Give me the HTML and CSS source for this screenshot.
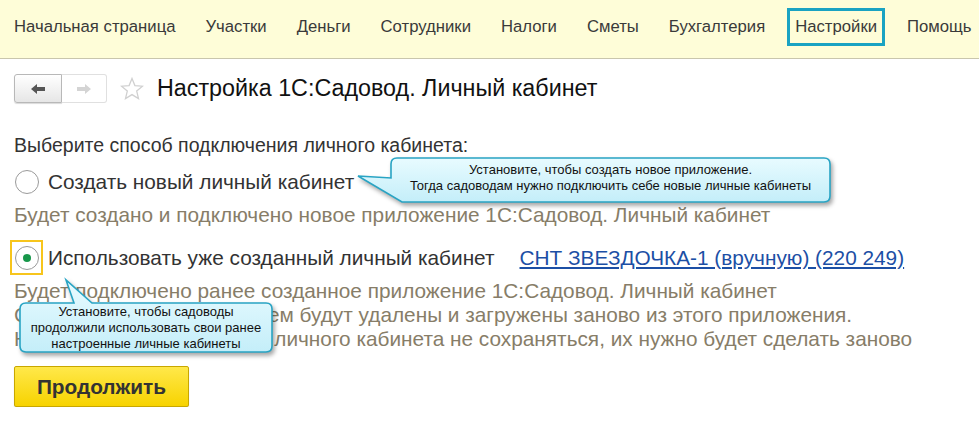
FILE: index.html
```html
<!DOCTYPE html>
<html lang="ru">
<head>
    <meta charset="UTF-8">
    <title>Настройка 1С:Садовод. Личный кабинет</title>
    <link rel="stylesheet" href="styles.css">
</head>
<body>
    <header class="topbar">
        <nav class="menu">
            <span class="menu-item">Начальная страница</span>
            <span class="menu-item">Участки</span>
            <span class="menu-item">Деньги</span>
            <span class="menu-item">Сотрудники</span>
            <span class="menu-item">Налоги</span>
            <span class="menu-item">Сметы</span>
            <span class="menu-item">Бухгалтерия</span>
            <span class="menu-item active">Настройки</span>
            <span class="menu-item">Помощь</span>
        </nav>
    </header>

    <main class="page">
        <div class="titlebar">
            <div class="nav-buttons">
                <span class="nav-btn back">
                    <svg width="14" height="10" viewBox="0 0 14 10"><path d="M0 5 L6 0 V3 H14 V7 H6 V10 Z"/></svg>
                </span>
                <span class="nav-btn forward">
                    <svg width="14" height="10" viewBox="0 0 14 10"><path d="M14 5 L8 0 V3 H0 V7 H8 V10 Z"/></svg>
                </span>
            </div>
            <svg class="star" width="24" height="24" viewBox="0 0 24 24">
                <path d="M12 1.5 L14.9 8.6 L22.5 9.2 L16.7 14.1 L18.5 21.6 L12 17.6 L5.5 21.6 L7.3 14.1 L1.5 9.2 L9.1 8.6 Z"/>
            </svg>
            <h1>Настройка 1С:Садовод. Личный кабинет</h1>
        </div>

        <p class="prompt">Выберите способ подключения личного кабинета:</p>

        <div class="option first">
            <span class="radio-box"><span class="radio"></span></span>
            <span class="option-label">Создать новый личный кабинет</span>
        </div>
        <p class="hint">Будет создано и подключено новое приложение 1С:Садовод. Личный кабинет</p>

        <div class="option second">
            <span class="radio-box focused"><span class="radio checked"></span></span>
            <span class="option-label">Использовать уже созданный личный кабинет</span>
            <a class="app-link" href="#">СНТ ЗВЕЗДОЧКА-1 (вручную) (220 249)</a>
        </div>
        <p class="hint">
            Будет подключено ранее созданное приложение 1С:Садовод. Личный кабинет<br>
            Сведения о садоводах в нем будут удалены и загружены заново из этого приложения.<br>
            Настройки подключенного личного кабинета не сохраняться, их нужно будет сделать заново
        </p>

        <button class="continue" type="button">Продолжить</button>

        <!-- callouts over the form -->
        <div class="callout callout-new">
            <svg class="callout-shape" width="485" height="52" viewBox="0 0 485 52">
                <defs>
                    <linearGradient id="fillA" x1="0" y1="0" x2="0" y2="1">
                        <stop offset="0" stop-color="#e8fbff"/>
                        <stop offset="1" stop-color="#c4eef9"/>
                    </linearGradient>
                </defs>
                <path d="M45 3 H472 Q478 3 478 9 V41 Q478 47 472 47 H50 L6 21 L39 23 V9 Q39 3 45 3 Z" fill="url(#fillA)"/>
            </svg>
            <div class="callout-text">Установите, чтобы создать новое приложение.<br>Тогда садоводам нужно подключить себе новые личные кабинеты</div>
        </div>

        <div class="callout callout-old">
            <svg class="callout-shape" width="262" height="90" viewBox="0 0 262 90">
                <defs>
                    <linearGradient id="fillB" x1="0" y1="0" x2="0" y2="1">
                        <stop offset="0" stop-color="#e8fbff"/>
                        <stop offset="1" stop-color="#c4eef9"/>
                    </linearGradient>
                </defs>
                <path d="M10 35 H58 L50 12 L76 35 H250 Q256 35 256 41 V78 Q256 84 250 84 H10 Q4 84 4 78 V41 Q4 35 10 35 Z" fill="url(#fillB)"/>
            </svg>
            <div class="callout-text">Установите, чтобы садоводы<br>продолжили использовать свои ранее<br>настроенные личные кабинеты</div>
        </div>
    </main>
</body>
</html>
```

FILE: styles.css
```css
body {
    margin: 0;
    font-family: "Liberation Sans", Arial, sans-serif;
    background-color: #fff;
    color: #333;
}
.topbar {
    height: 58px;
    background-color: #fefdd8;
    border-bottom: 1px solid #c9c6ad;
}
.menu {
    display: flex;
    gap: 14px;
    padding: 8px 0 0 6px;
    white-space: nowrap;
}
.menu-item {
    font-size: 16.7px;
    line-height: 20px;
    padding: 6px 5px;
    border: 3px solid transparent;
    color: #3a3a3a;
}
.menu-item.active {
    border-color: #1aa3c2;
}
.page {
    position: relative;
    padding: 0 14px;
}
.titlebar {
    display: flex;
    align-items: center;
    height: 31px;
    padding-top: 14px;
}
.nav-buttons {
    display: flex;
}
.nav-btn {
    display: flex;
    align-items: center;
    justify-content: center;
    height: 29px;
    box-sizing: border-box;
}
.nav-btn.back {
    width: 48px;
    border: 1px solid #b8b8b8;
    border-radius: 3px 0 0 3px;
    background: linear-gradient(#ffffff, #e6e6e6);
    box-shadow: 0 1px 1px rgba(0, 0, 0, 0.15);
}
.nav-btn.back path {
    fill: #555;
}
.nav-btn.forward {
    width: 45px;
    border: 1px solid #e0e0e0;
    border-left: none;
    border-radius: 0 3px 3px 0;
    background: #fff;
}
.nav-btn.forward path {
    fill: #d4d4d4;
}
.star {
    margin-left: 13px;
}
.star path {
    fill: none;
    stroke: #d0d0d0;
    stroke-width: 1.3;
}
h1 {
    margin: 0 0 0 13px;
    font-size: 23.3px;
    font-weight: normal;
    color: #111;
}
.prompt {
    margin: 29px 0 0;
    font-size: 19.5px;
    line-height: 24px;
    color: #333;
}
.option {
    display: flex;
    align-items: center;
    white-space: nowrap;
}
.option.first {
    margin-top: 8px;
    height: 34px;
}
.option.second {
    margin-top: 13px;
    height: 35px;
}
.radio-box {
    display: flex;
    align-items: center;
    justify-content: center;
    width: 33px;
    height: 35px;
    margin-left: -4px;
    box-sizing: border-box;
    border: 2px solid transparent;
}
.radio-box.focused {
    border-color: #f7c51c;
}
.radio {
    display: flex;
    align-items: center;
    justify-content: center;
    width: 24px;
    height: 24px;
    box-sizing: border-box;
    border: 1px solid #9a9a9a;
    border-radius: 50%;
    background: #fff;
}
.radio.checked::after {
    content: "";
    width: 8px;
    height: 8px;
    border-radius: 50%;
    background: #17974a;
}
.option-label {
    margin-left: 5px;
    font-size: 20.8px;
    color: #333;
}
.app-link {
    margin-left: 25px;
    font-size: 20.8px;
    color: #1c4fa5;
}
.hint {
    margin: 4px 0 0;
    font-size: 20.8px;
    line-height: 24px;
    color: #877d68;
    white-space: nowrap;
}
.continue {
    display: block;
    margin-top: 15px;
    width: 175px;
    height: 41px;
    border: 1px solid #c8a700;
    border-radius: 2px;
    background: linear-gradient(#ffe84a, #f7d300);
    font-family: "Liberation Sans", Arial, sans-serif;
    font-size: 20.8px;
    font-weight: bold;
    color: #333;
    box-shadow: 0 1px 1px rgba(0, 0, 0, 0.2);
}
.callout {
    position: absolute;
}
.callout-shape {
    display: block;
    filter: drop-shadow(2px 3px 2px rgba(0, 0, 0, 0.35));
}
.callout-shape path {
    stroke: #28a4c4;
    stroke-width: 1.6;
}
.callout-text {
    position: absolute;
    font-size: 13px;
    line-height: 16px;
    color: #111;
    text-align: center;
}
.callout-new {
    left: 352px;
    top: 96px;
}
.callout-new .callout-text {
    left: 39px;
    top: 7px;
    width: 439px;
}
.callout-old {
    left: 16px;
    top: 209px;
}
.callout-old .callout-text {
    left: 4px;
    top: 36px;
    width: 252px;
}
```
